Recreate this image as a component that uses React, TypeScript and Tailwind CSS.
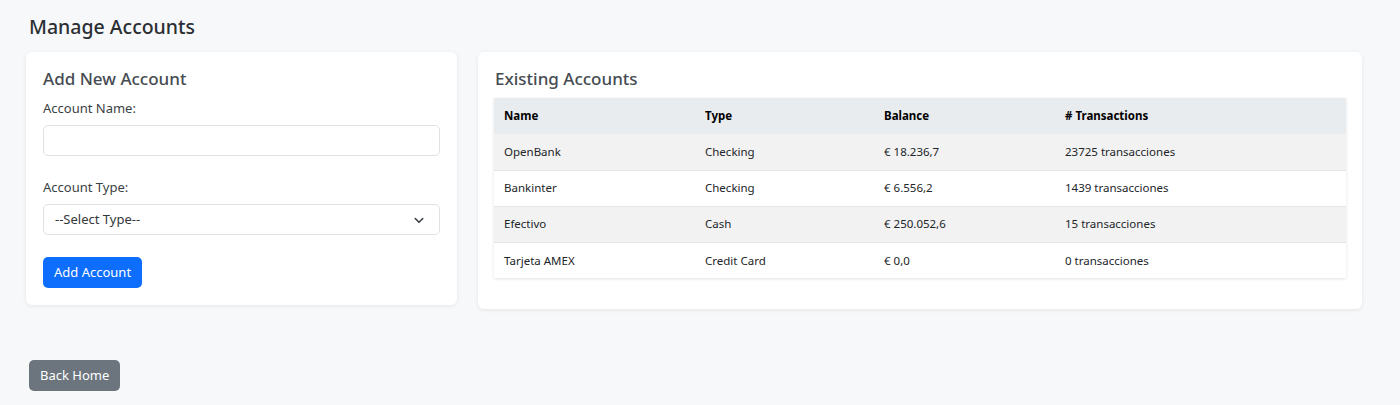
import React from "react";

const rows = [
  { name: "OpenBank", type: "Checking", balance: "€ 18.236,7", tx: "23725 transacciones" },
  { name: "Bankinter", type: "Checking", balance: "€ 6.556,2", tx: "1439 transacciones" },
  { name: "Efectivo", type: "Cash", balance: "€ 250.052,6", tx: "15 transacciones" },
  { name: "Tarjeta AMEX", type: "Credit Card", balance: "€ 0,0", tx: "0 transacciones" },
];

export default function App() {
  return (
    <div
      className="min-h-[405px] bg-[#f7f8fa] text-[#212529] pl-[26px] pr-[38px] pt-[14px]"
      style={{ fontFamily: '"Noto Sans", "Open Sans", sans-serif' }}
    >
      <h2 className="pl-[3px] text-[19.5px] leading-[26px] font-medium text-[#2b2f33]">Manage Accounts</h2>
      <div className="mt-[12px] flex items-start gap-[21px]">
        <div className="w-[431px] h-[253px] rounded-[6px] bg-white shadow-[0_1px_4px_rgba(0,0,0,0.08)] px-[17px] pt-[15px]">
          <h3 className="text-[17px] leading-[24px] font-medium text-[#454b51]">Add New Account</h3>
          <label className="block mt-[7px] text-[13px] leading-[20px] text-[#3a3f44]">Account Name:</label>
          <div className="mt-[7px] h-[31px] rounded-[5px] border border-[#dee2e6] bg-white" />
          <label className="block mt-[21px] text-[13px] leading-[20px] text-[#3a3f44]">Account Type:</label>
          <div className="mt-[7px] h-[31px] rounded-[5px] border border-[#dee2e6] bg-white flex items-center justify-between pl-[11px] pr-[14px]">
            <span className="text-[13px] text-[#33383d]">--Select Type--</span>
            <svg width="12" height="12" viewBox="0 0 16 16" fill="none" stroke="#343a40" strokeWidth="2" strokeLinecap="round" strokeLinejoin="round">
              <path d="M3 6l5 5 5-5" />
            </svg>
          </div>
          <button className="mt-[22px] h-[31px] px-[11px] rounded-[5px] bg-[#0d6efd] text-white text-[13px]">
            Add Account
          </button>
        </div>
        <div className="flex-1 h-[257px] rounded-[6px] bg-white shadow-[0_1px_4px_rgba(0,0,0,0.08)] px-[16px] pt-[15px]">
          <h3 className="pl-[1px] text-[17px] leading-[24px] font-medium text-[#454b51]">Existing Accounts</h3>
          <div className="mt-[7px] shadow-[0_1px_3px_rgba(0,0,0,0.12)]">
            <table className="w-full border-collapse text-[11.5px]">
              <thead>
                <tr className="bg-[#e9ecef] h-[36px] text-left">
                  <th className="w-[201px] pl-[10px] font-bold text-black">Name</th>
                  <th className="w-[179px] pl-[10px] font-bold text-black">Type</th>
                  <th className="w-[181px] pl-[10px] font-bold text-black">Balance</th>
                  <th className="pl-[10px] font-bold text-black"># Transactions</th>
                </tr>
              </thead>
              <tbody>
                {rows.map((r, i) => (
                  <tr
                    key={r.name}
                    className={
                      (i % 2 === 0 ? "bg-[#f2f2f2] " : "bg-white ") +
                      (i === 3 ? "h-[36px]" : "h-[36px] border-b border-[#e3e5e8]")
                    }
                  >
                    <td className="pl-[10px] text-[#212529]">{r.name}</td>
                    <td className="pl-[10px] text-[#212529]">{r.type}</td>
                    <td className="pl-[10px] text-[#212529]">{r.balance}</td>
                    <td className="pl-[10px] text-[#212529]">{r.tx}</td>
                  </tr>
                ))}
              </tbody>
            </table>
          </div>
        </div>
      </div>
      <button className="mt-[51px] ml-[3px] h-[31px] px-[11px] rounded-[5px] bg-[#6c757d] text-white text-[13px]">
        Back Home
      </button>
    </div>
  );
}
